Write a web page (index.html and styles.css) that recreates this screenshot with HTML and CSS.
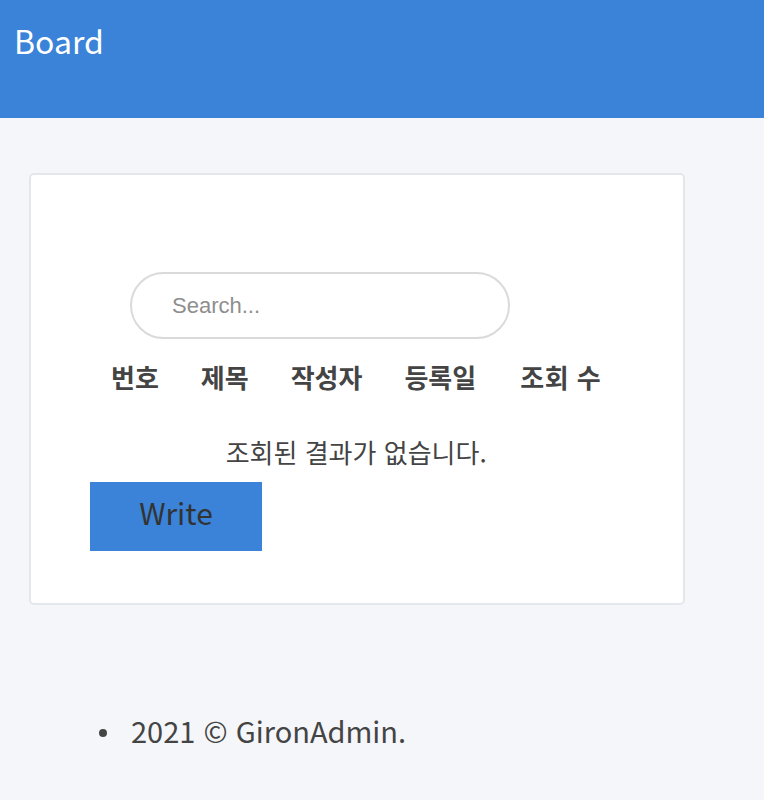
FILE: index.html
```html
<!DOCTYPE html>
<html lang="ko">
<head>
<meta charset="utf-8">
<title>Board</title>
<link rel="stylesheet" href="styles.css">
</head>
<body>
<header class="topbar">
  <h1 class="brand">Board</h1>
</header>
<main class="page">
  <section class="card">
    <div class="search-wrap">
      <input class="search" type="text" placeholder="Search...">
    </div>
    <table class="board">
      <thead>
        <tr><th>번호</th><th>제목</th><th>작성자</th><th>등록일</th><th>조회 수</th></tr>
      </thead>
      <tbody>
        <tr><td colspan="5" class="empty">조회된 결과가 없습니다.</td></tr>
      </tbody>
    </table>
    <button class="write" type="button">Write</button>
  </section>
  <footer class="foot">
    <ul class="foot-list"><li>2021 © GironAdmin.</li></ul>
  </footer>
</main>
</body>
</html>
```
FILE: styles.css
```css
html, body {
  margin: 0;
  padding: 0;
}
body {
  background: #f5f6fa;
  font-family: "Noto Sans CJK KR", "Noto Sans", sans-serif;
  color: #444;
}
.topbar {
  background: #3a83d8;
  height: 118px;
  box-sizing: border-box;
  padding: 23px 14px 0;
}
.brand {
  margin: 0;
  font-size: 32px;
  font-weight: 400;
  line-height: 34px;
  color: #fff;
}
.page {
  padding: 55px 0 0 29px;
}
.card {
  width: 656px;
  box-sizing: border-box;
  background: #fff;
  border: 2px solid #e3e6eb;
  border-radius: 5px;
  padding: 97px 0 52px 59px;
}
.search-wrap {
  padding-left: 40px;
  margin-bottom: 13px;
}
.search {
  display: block;
  width: 380px;
  height: 67px;
  box-sizing: border-box;
  border: 2px solid #dadada;
  border-radius: 34px;
  padding: 0 0 0 40px;
  font-family: "Liberation Sans", Arial, sans-serif;
  font-size: 22px;
  color: #333;
  outline: none;
  background: #fff;
}
.search::placeholder {
  color: #8e8e8e;
}
.board {
  border-collapse: collapse;
  border-spacing: 0;
}
.board th {
  padding: 0 21px;
  font-size: 26px;
  font-weight: 700;
  line-height: 50px;
  color: #444;
}
.board th:last-child {
  padding-left: 23px;
  letter-spacing: 0.5px;
}
.board td.empty {
  padding: 30px 0 10px;
  text-align: center;
  font-size: 26px;
  line-height: 40px;
  color: #444;
}
.write {
  display: block;
  width: 172px;
  height: 69px;
  border: none;
  border-radius: 0;
  background: #3a83d8;
  color: #333;
  font-family: "Noto Sans CJK KR", "Noto Sans", sans-serif;
  font-size: 30px;
  line-height: 40px;
  padding: 0 0 10px;
}
.foot {
  padding-top: 105px;
}
.foot-list {
  margin: 0 0 0 62px;
  padding-left: 40px;
  font-size: 29px;
  line-height: 40px;
  color: #444;
  list-style: none;
}
.foot-list li {
  position: relative;
}
.foot-list li::before {
  content: "";
  position: absolute;
  left: -32px;
  top: 19px;
  width: 8px;
  height: 8px;
  border-radius: 50%;
  background: #444;
}
```
